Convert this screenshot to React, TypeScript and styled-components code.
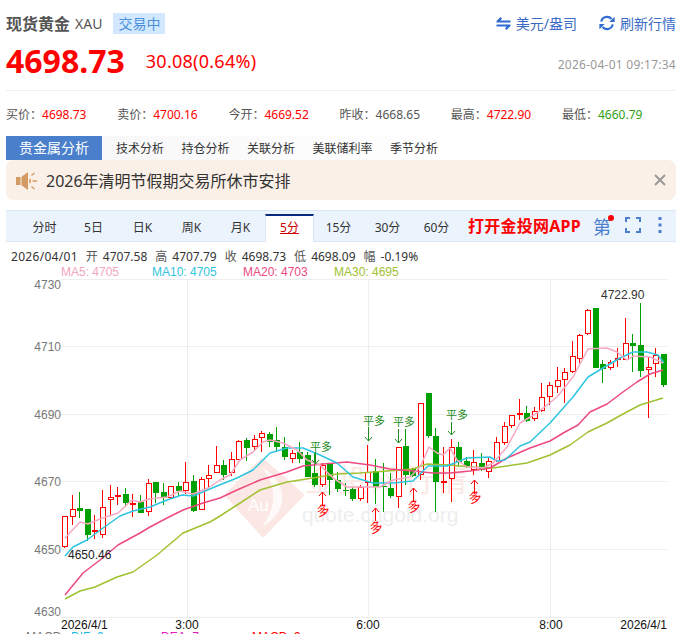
import { createGlobalStyle, styled } from "styled-components";

const GlobalStyle = createGlobalStyle`
  html, body {
    margin: 0;
    padding: 0;
    background: #fff;
    overflow: hidden;
  }
  body {
    font-family: "Noto Sans", "Noto Sans CJK SC", sans-serif;
  }
`;

const RED = "#ff0000";
const GREEN = "#00a000";

// x, wick top, body top, body bottom, wick bottom, u = up (hollow) / d = down (solid)
const CANDLES: [number, number, number, number, number, "u" | "d"][] = [
  [65, 516, 516, 547, 548, "u"], [73, 495, 509, 517, 525, "u"], [80, 492, 508, 511, 518, "d"],
  [88, 509, 509, 535, 541, "d"], [95, 515, 530, 531, 539, "u"], [103, 490, 507, 535, 538, "u"],
  [111, 485, 497, 500, 515, "u"], [118, 487, 495, 496, 505, "u"], [126, 488, 494, 503, 507, "d"],
  [133, 494, 503, 505, 517, "u"], [141, 495, 502, 513, 513, "d"], [149, 479, 483, 512, 516, "u"],
  [156, 482, 482, 493, 503, "d"], [164, 483, 492, 498, 505, "d"], [171, 486, 486, 498, 498, "u"],
  [179, 482, 486, 491, 496, "d"], [186, 462, 482, 491, 494, "u"], [194, 475, 481, 511, 512, "d"],
  [202, 477, 479, 510, 510, "u"], [209, 465, 475, 479, 488, "u"], [217, 446, 465, 473, 473, "u"],
  [224, 460, 465, 475, 480, "d"], [232, 452, 459, 473, 476, "u"], [239, 440, 441, 460, 460, "u"],
  [247, 438, 440, 448, 461, "d"], [255, 435, 439, 447, 450, "u"], [262, 431, 433, 438, 452, "u"],
  [270, 432, 434, 442, 447, "d"], [277, 427, 440, 447, 452, "d"], [285, 437, 447, 457, 460, "d"],
  [293, 450, 453, 459, 463, "u"], [300, 442, 452, 459, 463, "d"], [308, 452, 455, 477, 477, "d"],
  [315, 452, 473, 485, 487, "d"], [323, 463, 465, 485, 487, "u"], [330, 463, 463, 480, 495, "d"],
  [338, 472, 480, 489, 492, "d"], [346, 483, 490, 491, 496, "d"], [353, 487, 489, 499, 501, "d"],
  [361, 485, 487, 499, 501, "u"], [368, 445, 472, 483, 503, "u"], [376, 459, 471, 487, 504, "d"],
  [384, 463, 486, 487, 512, "d"], [391, 473, 488, 496, 498, "d"], [399, 447, 447, 497, 508, "u"],
  [406, 429, 446, 475, 485, "d"], [413, 468, 469, 476, 477, "d"], [421, 403, 403, 475, 480, "u"],
  [429, 393, 393, 436, 438, "d"], [436, 428, 436, 482, 512, "d"], [444, 447, 481, 482, 493, "u"],
  [452, 439, 447, 479, 502, "u"], [459, 442, 447, 462, 467, "d"], [467, 457, 461, 466, 468, "d"],
  [474, 450, 462, 470, 475, "u"], [482, 453, 463, 470, 471, "d"], [489, 458, 461, 472, 478, "u"],
  [497, 437, 442, 461, 462, "u"], [505, 422, 426, 443, 445, "u"], [512, 415, 415, 426, 428, "u"],
  [520, 399, 413, 415, 420, "u"], [527, 406, 413, 421, 422, "d"], [535, 407, 411, 419, 421, "u"],
  [542, 383, 397, 411, 412, "u"], [550, 382, 385, 397, 405, "u"], [558, 367, 380, 387, 393, "u"],
  [565, 368, 372, 380, 403, "u"], [573, 341, 356, 372, 373, "u"], [580, 334, 335, 359, 363, "u"],
  [588, 309, 310, 334, 335, "u"], [596, 308, 308, 368, 368, "d"], [603, 360, 364, 369, 383, "d"],
  [611, 360, 362, 368, 370, "u"], [618, 348, 358, 359, 367, "u"], [626, 318, 343, 360, 360, "u"],
  [633, 334, 343, 346, 372, "d"], [641, 303, 345, 371, 377, "d"], [649, 357, 367, 370, 418, "u"],
  [656, 348, 355, 364, 377, "u"], [664, 354, 354, 385, 387, "d"],
];

const MA5 =
  "65,538 80,522 88,524 100,519 118,513 132,500 140,502 149,499 167,497 180,491 193,494 208,488 220,480 230,475 240,460 253,452 263,442 270,440 283,443 297,450 307,460 320,465 333,478 347,487 363,487 380,487 393,480 410,477 420,467 429,447 437,453 443,455 450,448 457,460 467,467 483,468 493,463 507,447 520,423 537,413 557,397 573,377 588,349 607,348 617,352 627,360 633,356 650,357 663,363";
const MA10 =
  "65,556 73,547 87,540 103,528 120,516 133,511 150,507 167,500 182,495 193,496 217,486 237,478 253,470 270,453 287,448 303,448 320,455 337,463 353,477 373,483 393,483 413,481 428,466 447,466 467,458 490,457 497,461 505,460 520,446 530,442 550,423 573,397 588,377 603,368 620,358 633,352 647,352 658,355 664,363";
const MA20 =
  "65,595 83,573 100,560 118,545 140,533 150,527 167,518 183,510 203,503 220,498 237,490 260,480 287,472 303,466 323,464 347,462 370,465 390,469 413,471 433,473 450,473 470,471 490,468 507,458 530,448 550,441 565,432 578,425 590,412 607,404 623,392 637,382 650,374 663,370";
const MA30 =
  "65,599 80,591 95,587 117,577 133,572 157,555 183,533 210,522 220,516 237,505 260,490 287,482 313,478 337,474 360,473 387,471 413,469 427,464 450,465 470,467 493,468 527,463 550,455 570,445 588,432 607,423 623,414 640,405 663,398";

const GRID_Y = [279, 346, 414, 481, 549, 617];
const GRID_X = [187, 368, 550];
const AXIS_LABELS: [string, number][] = [
  ["4730", 284], ["4710", 346], ["4690", 414], ["4670", 481], ["4650", 549], ["4630", 611],
];
const TIME_LABELS: [string, number, "start" | "middle" | "end"][] = [
  ["2026/4/1", 61, "start"], ["3:00", 187, "middle"], ["6:00", 368, "middle"],
  ["8:00", 551, "middle"], ["2026/4/1", 667, "end"],
];

const CLOSE_SIGNALS = [
  { x: 315, textY: 446, from: 452, to: 464 },
  { x: 368, textY: 420, from: 427, to: 441 },
  { x: 398, textY: 421, from: 429, to: 443 },
  { x: 451, textY: 414, from: 422, to: 435 },
];
const OPEN_SIGNALS = [
  { x: 322, from: 506, to: 492, textY: 510 },
  { x: 375, from: 521, to: 508, textY: 527 },
  { x: 413, from: 502, to: 488, textY: 506 },
  { x: 474, from: 494, to: 480, textY: 497 },
];

const STATS: { label: string; value: string; tone: "up" | "flat" | "down" }[] = [
  { label: "买价", value: "4698.73", tone: "up" },
  { label: "卖价", value: "4700.16", tone: "up" },
  { label: "今开", value: "4669.52", tone: "up" },
  { label: "昨收", value: "4668.65", tone: "flat" },
  { label: "最高", value: "4722.90", tone: "up" },
  { label: "最低", value: "4660.79", tone: "down" },
];

const ANALYSIS_TABS = ["技术分析", "持仓分析", "关联分析", "美联储利率", "季节分析"];
const PERIODS = ["分时", "5日", "日K", "周K", "月K", "5分", "15分", "30分", "60分"];

const Page = styled.div`
  width: 670px;
  height: 634px;
  padding-left: 6px;
  overflow: hidden;
  color: #333;
`;

const TopRow = styled.div`
  display: flex;
  justify-content: space-between;
  align-items: center;
  height: 30px;
  padding-top: 8px;
`;

const TitleGroup = styled.div`
  display: flex;
  align-items: center;
`;

const Title = styled.span`
  font-size: 16px;
  font-weight: 700;
  color: #555;
`;

const Code = styled.span`
  margin-left: 5px;
  font-size: 14px;
  color: #555;
`;

const Badge = styled.span`
  margin-left: 11px;
  width: 52px;
  height: 21px;
  line-height: 21px;
  text-align: center;
  font-size: 14px;
  color: #4a90d9;
  background: #d2e8ff;
`;

const Actions = styled.div`
  display: flex;
  align-items: center;
  gap: 22px;
`;

const ActionLink = styled.span`
  display: flex;
  align-items: center;
  gap: 5px;
  font-size: 14px;
  color: #3a6cc4;
`;

const PriceRow = styled.div`
  display: flex;
  align-items: center;
  height: 52px;
  border-bottom: 1px solid #eeeeee;
`;

const Price = styled.span`
  font-size: 32px;
  font-weight: 700;
  color: ${RED};
  margin-top: -7px;
`;

const Change = styled.span`
  margin-left: 21px;
  font-size: 18px;
  letter-spacing: 0.25px;
  color: ${RED};
  margin-top: -7px;
`;

const Stamp = styled.span`
  margin-left: auto;
  font-size: 12px;
  letter-spacing: 0.26px;
  color: #999;
`;

const StatsRow = styled.div`
  display: grid;
  grid-template-columns: repeat(6, 111.2px);
  align-items: center;
  height: 45px;
  font-size: 12px;
  color: #555;
`;

const toneColor = { up: RED, flat: "#555", down: "#2f9e12" };

const StatValue = styled.span<{ $tone: "up" | "flat" | "down" }>`
  color: ${(p) => toneColor[p.$tone]};
`;

const TabStrip = styled.div`
  display: flex;
  height: 24px;
  background: linear-gradient(to right, #f6f6f8, #fff 70%);
`;

const ActiveTab = styled.div`
  width: 96px;
  line-height: 24px;
  text-align: center;
  font-size: 14px;
  color: #fff;
  background: #4a7fcb;
  margin-right: 14px;
`;

const TabItem = styled.div`
  line-height: 25px;
  font-size: 12px;
  color: #333;
  margin-right: 17.5px;
`;

const Notice = styled.div`
  display: flex;
  align-items: center;
  height: 40px;
  padding: 0 10px;
  box-sizing: border-box;
  background: #fbf0e7;
  border-radius: 8px;
  font-size: 16px;
  color: #333;
`;

const NoticeText = styled.span`
  margin-left: 9px;
  flex: 1;
`;

const ChartToolbar = styled.div`
  display: flex;
  align-items: flex-start;
  height: 30px;
  margin-top: 10px;
  padding-left: 14px;
  background: #ebf3fd;
  border-top: 1px solid #dbe6f6;
  border-bottom: 1px solid #dbe6f6;
`;

const PeriodTab = styled.div<{ $active?: boolean }>`
  width: 49px;
  height: 28px;
  box-sizing: border-box;
  margin-top: 3px;
  text-align: center;
  font-size: 12px;
  line-height: 24px;
  color: ${(p) => (p.$active ? "#cc0000" : "#333")};
  text-decoration: ${(p) => (p.$active ? "underline" : "none")};
  background: ${(p) => (p.$active ? "#fff" : "transparent")};
  border-top: 2px solid ${(p) => (p.$active ? "#0a2a80" : "transparent")};
  border-left: 1px solid ${(p) => (p.$active ? "#dbe6f6" : "transparent")};
  border-right: 1px solid ${(p) => (p.$active ? "#dbe6f6" : "transparent")};
`;

const AppLink = styled.div`
  margin-left: 7px;
  font-size: 16px;
  font-weight: 700;
  letter-spacing: 0.25px;
  line-height: 30px;
  color: ${RED};
  white-space: nowrap;
`;

const HelpMark = styled.div`
  position: relative;
  margin-left: 12px;
  font-size: 18px;
  line-height: 32px;
  color: #4a7fcb;
  &::after {
    content: "";
    position: absolute;
    top: 4px;
    right: -3px;
    width: 6px;
    height: 6px;
    border-radius: 50%;
    background: ${RED};
  }
`;

const ToolIcon = styled.svg<{ $gap: number }>`
  flex: none;
  margin-top: 6px;
  margin-left: ${(p) => p.$gap}px;
`;

const OhlcRow = styled.div`
  display: flex;
  align-items: flex-end;
  gap: 5px;
  height: 23px;
  padding-left: 5px;
  font-size: 12px;
  line-height: 16px;
  color: #333;
`;

const OhlcDate = styled.span`
  letter-spacing: 0.3px;
`;

const OhlcLabel = styled.span`
  color: #555;
  margin-left: 3px;
`;

const MaRow = styled.div`
  display: grid;
  grid-template-columns: repeat(4, 91px);
  height: 13px;
  padding-left: 55px;
  font-family: "Liberation Sans", Arial, sans-serif;
  font-size: 12px;
  line-height: 14px;
`;

const MaLabel = styled.span<{ $color: string }>`
  color: ${(p) => p.$color};
`;

const Chart = styled.svg`
  display: block;
  overflow: visible;
  font-family: "Liberation Sans", Arial, sans-serif;
`;

const MacdRow = styled.div`
  display: flex;
  height: 20px;
  padding-left: 20px;
  font-family: "Liberation Sans", Arial, sans-serif;
  font-size: 12px;
  line-height: 14px;
`;

const MacdItem = styled.span<{ $color: string; $width: number }>`
  width: ${(p) => p.$width}px;
  color: ${(p) => p.$color};
`;

const ExchangeIcon = () => (
  <svg width="15" height="15" viewBox="0 0 15 15">
    <path d="M4.5 1 L0.5 5 V6.6 H14.5 V4.6 H4.4 L6 2.4 Z" fill="#2f6bd0" />
    <path d="M10.5 14 L14.5 10 V8.4 H0.5 V10.4 H10.6 L9 12.6 Z" fill="#2f6bd0" />
  </svg>
);

const RefreshIcon = () => (
  <svg width="16" height="16" viewBox="0 0 16 16" fill="none">
    <path d="M2.2 6.6 A6 6 0 0 1 12.6 4" stroke="#2f6bd0" strokeWidth="2" />
    <path d="M13.8 9.4 A6 6 0 0 1 3.4 12" stroke="#2f6bd0" strokeWidth="2" />
    <path d="M15.6 1.8 V7 H10.4 Z" fill="#2f6bd0" />
    <path d="M0.4 14.2 V9 H5.6 Z" fill="#2f6bd0" />
  </svg>
);

const SpeakerIcon = () => (
  <svg width="21" height="21" viewBox="0 0 21 21" fill="none">
    <path d="M0 7 H4.5 V15 H0 Z M5.5 6.8 L12 2 V20 L5.5 15.2 Z" fill="#d39a63" />
    <path d="M13.5 9 A3 3 0 0 1 13.5 13" stroke="#d39a63" strokeWidth="1.4" />
    <path d="M15.5 5.5 L18.5 3 M16.5 11 H21 M15.5 16.5 L18.5 19" stroke="#d39a63" strokeWidth="1.4" />
  </svg>
);

const CloseIcon = () => (
  <svg width="12" height="12" viewBox="0 0 12 12">
    <path d="M1 1 L11 11 M11 1 L1 11" stroke="#999" strokeWidth="2" />
  </svg>
);

const Watermark = () => (
  <g>
    <path d="M262 460 L302 495 L263 535 L227 495 Z" fill="#fbe7e3" stroke="#fbe7e3" strokeWidth="4" strokeLinejoin="round" />
    <path d="M262 468 C286 480 292 510 262 527 C278 505 276 484 262 468 Z" fill="#fff" opacity="0.8" />
    <text x="248" y="511" fontSize="17" fill="#fff">Au</text>
    <text x="305" y="491" fontSize="30" fill="#fbe9e6" fontFamily='"Noto Sans CJK SC", sans-serif' letterSpacing="3">金投网行情</text>
    <text x="302" y="522" fontSize="21" fill="#eeeeee">quote.cngold.org</text>
  </g>
);

const App = () => {
  return (
    <Page>
      <GlobalStyle />
      <TopRow>
        <TitleGroup>
          <Title>现货黄金</Title>
          <Code>XAU</Code>
          <Badge>交易中</Badge>
        </TitleGroup>
        <Actions>
          <ActionLink><ExchangeIcon />美元/盎司</ActionLink>
          <ActionLink><RefreshIcon />刷新行情</ActionLink>
        </Actions>
      </TopRow>
      <PriceRow>
        <Price>4698.73</Price>
        <Change>30.08(0.64%)</Change>
        <Stamp>2026-04-01 09:17:34</Stamp>
      </PriceRow>
      <StatsRow>
        {STATS.map((s) => (
          <span key={s.label}>
            {s.label}：<StatValue $tone={s.tone}>{s.value}</StatValue>
          </span>
        ))}
      </StatsRow>
      <TabStrip>
        <ActiveTab>贵金属分析</ActiveTab>
        {ANALYSIS_TABS.map((t) => (
          <TabItem key={t}>{t}</TabItem>
        ))}
      </TabStrip>
      <Notice>
        <SpeakerIcon />
        <NoticeText>2026年清明节假期交易所休市安排</NoticeText>
        <CloseIcon />
      </Notice>
      <ChartToolbar>
        {PERIODS.map((p) => (
          <PeriodTab key={p} $active={p === "5分"}>{p}</PeriodTab>
        ))}
        <AppLink>打开金投网APP</AppLink>
        <HelpMark>第</HelpMark>
        <ToolIcon $gap={14} width="16" height="16" viewBox="0 0 16 16" fill="none">
          <path d="M1 5 V1 H5 M11 1 H15 V5 M15 11 V15 H11 M5 15 H1 V11" stroke="#4a7fcb" strokeWidth="2" />
        </ToolIcon>
        <ToolIcon $gap={17} width="4" height="16" viewBox="0 0 4 16">
          <rect x="0.5" y="0" width="3" height="3" fill="#4a7fcb" />
          <rect x="0.5" y="6.5" width="3" height="3" fill="#4a7fcb" />
          <rect x="0.5" y="13" width="3" height="3" fill="#4a7fcb" />
        </ToolIcon>
      </ChartToolbar>
      <OhlcRow>
        <OhlcDate>2026/04/01</OhlcDate>
        <OhlcLabel>开</OhlcLabel><span>4707.58</span>
        <OhlcLabel>高</OhlcLabel><span>4707.79</span>
        <OhlcLabel>收</OhlcLabel><span>4698.73</span>
        <OhlcLabel>低</OhlcLabel><span>4698.09</span>
        <OhlcLabel>幅</OhlcLabel><span>-0.19%</span>
      </OhlcRow>
      <MaRow>
        <MaLabel $color="#f4a6c0">MA5: 4705</MaLabel>
        <MaLabel $color="#2fc4e0">MA10: 4705</MaLabel>
        <MaLabel $color="#ee4a80">MA20: 4703</MaLabel>
        <MaLabel $color="#a0c130">MA30: 4695</MaLabel>
      </MaRow>
      <Chart width="670" height="352" viewBox="6 278 670 352">
        {GRID_Y.map((y) => (
          <line key={y} x1="61" x2="667" y1={y + 0.5} y2={y + 0.5} stroke="#eeeeee" />
        ))}
        {GRID_X.map((x) => (
          <line key={x} x1={x + 0.5} x2={x + 0.5} y1="279" y2="617" stroke="#eeeeee" />
        ))}
        <Watermark />
        {AXIS_LABELS.map(([t, y]) => (
          <text key={t} x="61" y={y + 4.5} fontSize="12" fill="#777" textAnchor="end">{t}</text>
        ))}
        {TIME_LABELS.map(([t, x, anchor]) => (
          <text key={x} x={x} y="629" fontSize="12" fill="#111" textAnchor={anchor}>{t}</text>
        ))}
        {CANDLES.map(([x, wt, bt, bb, wb, dir]) => {
          const color = dir === "u" ? RED : GREEN;
          return (
            <g key={x}>
              <line x1={x - 0.5} x2={x - 0.5} y1={wt} y2={wb} stroke={color} />
              {dir === "u" ? (
                <rect x={x - 2.5} y={bt + 0.5} width="5" height={Math.max(bb - bt - 1, 1)} fill="#fff" stroke={RED} />
              ) : (
                <rect x={x - 3} y={bt} width="6" height={Math.max(bb - bt, 1)} fill={GREEN} />
              )}
            </g>
          );
        })}
        <polyline points={MA30} fill="none" stroke="#a0c130" strokeWidth="1.5" strokeLinejoin="round" />
        <polyline points={MA20} fill="none" stroke="#ee4a80" strokeWidth="1.5" strokeLinejoin="round" />
        <polyline points={MA10} fill="none" stroke="#2fc4e0" strokeWidth="1.5" strokeLinejoin="round" />
        <polyline points={MA5} fill="none" stroke="#f7a8c2" strokeWidth="1.5" strokeLinejoin="round" />
        {CLOSE_SIGNALS.map((s) => (
          <g key={s.x} fill="none" stroke="#1e8a1e">
            <path d={`M${s.x + 0.5} ${s.from} V${s.to} M${s.x - 3} ${s.to - 4} L${s.x + 0.5} ${s.to} L${s.x + 4} ${s.to - 4}`} />
            <text x={s.x - 5} y={s.textY + 5} fontSize="11" fill="#1e8a1e" stroke="none" fontFamily='"Noto Sans CJK SC", sans-serif'>平多</text>
          </g>
        ))}
        {OPEN_SIGNALS.map((s) => (
          <g key={s.x} fill="none" stroke={RED}>
            <path d={`M${s.x + 0.5} ${s.from} V${s.to} M${s.x - 3} ${s.to + 4} L${s.x + 0.5} ${s.to} L${s.x + 4} ${s.to + 4}`} />
            <text
              x={s.x + 1}
              y={s.textY + 5}
              fontSize="13"
              fill={RED}
              stroke="none"
              textAnchor="middle"
              transform={`rotate(-15 ${s.x + 1} ${s.textY})`}
              fontFamily='"Noto Sans CJK SC", sans-serif'
            >多</text>
          </g>
        ))}
        <text x="68" y="559" fontSize="12" fill="#222">4650.46</text>
        <text x="601" y="299" fontSize="12" fill="#333">4722.90</text>
      </Chart>
      <MacdRow>
        <MacdItem $color="#777" $width={45}>MACD</MacdItem>
        <MacdItem $color="#19b8e6" $width={90}>DIF: 0</MacdItem>
        <MacdItem $color="#e020c0" $width={91}>DEA: 7</MacdItem>
        <MacdItem $color={RED} $width={60}>MACD: 9</MacdItem>
      </MacdRow>
    </Page>
  );
};

export default App;
